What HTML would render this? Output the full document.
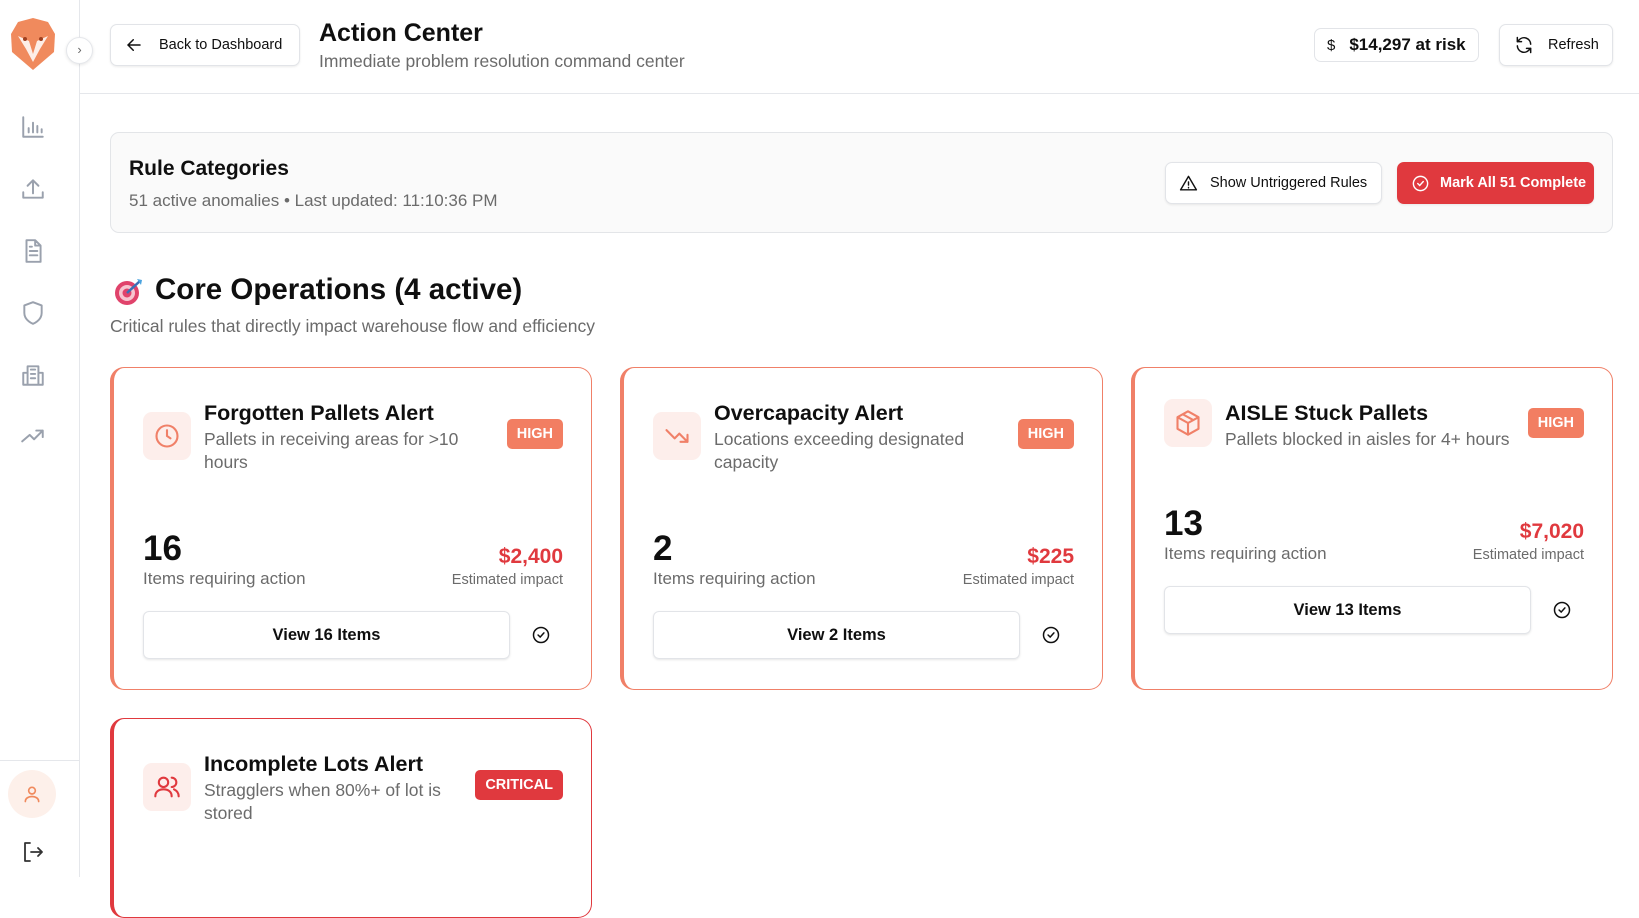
<!DOCTYPE html>
<html><head><meta charset="utf-8"><style>
*{box-sizing:border-box;margin:0;padding:0}
body{width:1639px;height:877px;overflow:hidden;background:#fff;font-family:"Liberation Sans",Arial,sans-serif;color:#0f0f0f;position:relative}
.abs{position:absolute}
.side{left:0;top:0;width:80px;height:877px;border-right:1px solid #e5e7eb;background:#fff}
.btn{position:absolute;border:1px solid #e2e4e8;border-radius:7px;background:#fff;display:flex;align-items:center;box-shadow:0 1px 2px rgba(0,0,0,.08);font-size:14.5px}
.card{position:absolute;border:1px solid #f08068;border-left:4px solid #f08068;border-radius:14px;background:#fff;padding:31px 28px 0 29px}
.hd{display:flex;align-items:flex-start}
.ic{width:48px;height:48px;border-radius:9px;background:#fdeeeb;display:flex;align-items:center;justify-content:center;flex:none;margin-top:13px}
.tt{margin-left:13px;flex:1}
.tt h3{font-size:21.5px;font-weight:600;line-height:26px;margin-top:1px}
.tt p{font-size:17.5px;color:#6b6b6b;line-height:23px;margin-top:2px}
.badge{background:#f27e62;color:#fff;font-weight:700;font-size:14.5px;border-radius:5px;padding:7px 10px;margin-top:20px;flex:none}
.nums{display:flex;justify-content:space-between;align-items:flex-end;margin-top:56px}
.big{font-size:35px;font-weight:700;line-height:38px}
.lbl{font-size:17px;color:#6b6b6b;line-height:22px}
.amt{font-size:21px;font-weight:600;color:#e0393e;text-align:right;line-height:26px}
.el{font-size:14.5px;color:#6b6b6b;text-align:right;line-height:20px}
.row{display:flex;align-items:center;margin-top:21px}
.vb{width:367px;height:48px;border:1px solid #e2e4e8;border-radius:6px;box-shadow:0 1px 2px rgba(0,0,0,.1);display:flex;align-items:center;justify-content:center;font-weight:700;font-size:16.5px}
.sv{stroke:#9aa1ad;fill:none;stroke-width:1.8;stroke-linecap:round;stroke-linejoin:round}
</style></head><body>
<div class="abs side">
<svg class="abs" style="left:8px;top:16px" width="50" height="55" viewBox="0 0 50 55"><path d="M25 2 L40 6 L47 18 L46 36 L25 54 L4 36 L3 18 L10 6 Z" fill="#f08a5d"/><path d="M10 20 L21 25 L25 38 L29 25 L40 20 L32 33 L25 46 L18 33 Z" fill="#fff" opacity=".85"/><circle cx="17" cy="23" r="2" fill="#a04020"/><circle cx="33" cy="23" r="2" fill="#a04020"/></svg>
<div class="abs" style="left:66px;top:37px;width:27px;height:27px;border-radius:50%;border:1px solid #e5e7eb;background:#fff;box-shadow:0 1px 3px rgba(0,0,0,.1);font-size:13px;color:#666;text-align:center;line-height:24px">›</div>
<svg class="abs" style="left:20px;top:114px" width="26" height="26" viewBox="0 0 24 24"><path class="sv" d="M3 3v18h18M8 17v-4M12 17V8M16 17v-6M20 17v-3"/></svg>
<svg class="abs" style="left:20px;top:176px" width="26" height="26" viewBox="0 0 24 24"><path class="sv" d="M3 15v5h18v-5M12 16V4M7 9l5-5 5 5"/></svg>
<svg class="abs" style="left:20px;top:238px" width="26" height="26" viewBox="0 0 24 24"><path class="sv" d="M14 2H6v20h13V7zM14 2v5h5M9 12h7M9 16h7M9 8h2"/></svg>
<svg class="abs" style="left:20px;top:300px" width="26" height="26" viewBox="0 0 24 24"><path class="sv" d="M12 22s8-3 8-10V5l-8-3-8 3v7c0 7 8 10 8 10z"/></svg>
<svg class="abs" style="left:20px;top:362px" width="26" height="26" viewBox="0 0 24 24"><path class="sv" d="M7 21V4h10v17zM7 10H3v11h18V10h-4M10 7h4M10 11h4M10 15h4"/></svg>
<svg class="abs" style="left:20px;top:423px" width="26" height="26" viewBox="0 0 24 24"><path class="sv" d="M2 17l7-6 4 4 8-8M15 7h6v6"/></svg>
<div class="abs" style="left:0;top:760px;width:80px;border-top:1px solid #e5e7eb"></div>
<div class="abs" style="left:8px;top:770px;width:48px;height:48px;border-radius:50%;background:#fdf0ea"></div>
<svg class="abs" style="left:22px;top:784px" width="20" height="20" viewBox="0 0 24 24"><circle cx="12" cy="8" r="4" fill="none" stroke="#f08a5d" stroke-width="2"/><path d="M4 21c0-4 4-6 8-6s8 2 8 6" fill="none" stroke="#f08a5d" stroke-width="2" stroke-linecap="round"/></svg>
<svg class="abs" style="left:21px;top:840px" width="24" height="24" viewBox="0 0 24 24"><path d="M9 3H4v18h5M10 12h11M17 8l4 4-4 4" fill="none" stroke="#333" stroke-width="1.8" stroke-linecap="round" stroke-linejoin="round"/></svg>
</div>
<div class="abs" style="left:80px;top:93px;width:1559px;border-top:1px solid #e5e7eb"></div>
<div class="btn" style="left:110px;top:24px;width:190px;height:42px;padding-left:14px"><svg width="18" height="18" viewBox="0 0 24 24"><path d="M20 12H5M11 5l-7 7 7 7" fill="none" stroke="#111" stroke-width="2" stroke-linecap="round"/></svg><span style="margin-left:16px">Back to Dashboard</span></div>
<div class="abs" style="left:319px;top:19px;font-size:25px;font-weight:700">Action Center</div>
<div class="abs" style="left:319px;top:51px;font-size:17.5px;color:#6b6b6b">Immediate problem resolution command center</div>
<div class="btn" style="left:1314px;top:28px;width:165px;height:34px;padding-left:12px;box-shadow:none;font-size:17px;font-weight:600"><span style="font-weight:400;font-size:15px">$</span><span style="margin-left:14px">$14,297 at risk</span></div>
<div class="btn" style="left:1499px;top:24px;width:114px;height:42px;padding-left:14px"><svg width="20" height="20" viewBox="0 0 24 24"><path d="M20 11a8 8 0 0 0-14-5L4 8M4 3v5h5M4 13a8 8 0 0 0 14 5l2-2M20 21v-5h-5" fill="none" stroke="#111" stroke-width="1.8" stroke-linecap="round" stroke-linejoin="round"/></svg><span style="margin-left:14px">Refresh</span></div>
<div class="abs" style="left:110px;top:132px;width:1503px;height:101px;background:#fafafa;border:1px solid #e3e5e8;border-radius:9px"></div>
<div class="abs" style="left:129px;top:157px;font-size:21px;font-weight:600">Rule Categories</div>
<div class="abs" style="left:129px;top:191px;font-size:17px;color:#6b6b6b">51 active anomalies • Last updated: 11:10:36 PM</div>
<div class="btn" style="left:1165px;top:162px;width:217px;height:42px;padding-left:13px"><svg width="19" height="19" viewBox="0 0 24 24"><path d="M12 3L2 20h20zM12 10v4M12 17v.5" fill="none" stroke="#111" stroke-width="1.8" stroke-linejoin="round" stroke-linecap="round"/></svg><span style="margin-left:12px">Show Untriggered Rules</span></div>
<div class="btn" style="left:1397px;top:162px;width:197px;height:42px;padding-left:13px;background:#e0393e;border-color:#e0393e;color:#fff;font-weight:600"><svg width="19" height="19" viewBox="0 0 24 24"><circle cx="12" cy="12" r="9" fill="none" stroke="#fff" stroke-width="1.8"/><path d="M8.5 12l2.5 2.5 4.5-5" fill="none" stroke="#fff" stroke-width="1.8" stroke-linecap="round"/></svg><span style="margin-left:10px">Mark All 51 Complete</span></div>
<svg class="abs" style="left:113px;top:276px" width="32" height="32" viewBox="0 0 32 32"><circle cx="14" cy="17" r="12" fill="#e0436b"/><circle cx="14" cy="17" r="8" fill="#f7c5d0"/><circle cx="14" cy="17" r="4.5" fill="#e0436b"/><path d="M14 17L27 5" stroke="#3b6fb6" stroke-width="2.5"/><path d="M24 3l5 1-1 5z" fill="#4aa3df"/></svg>
<div class="abs" style="left:155px;top:273px;font-size:29.5px;font-weight:700">Core Operations (4 active)</div>
<div class="abs" style="left:110px;top:316px;font-size:17.5px;color:#6b6b6b">Critical rules that directly impact warehouse flow and efficiency</div>

<div class="card" style="left:110px;top:367px;width:482px;height:323px">
<div class="hd"><div class="ic"><svg width="28" height="28" viewBox="0 0 24 24"><circle cx="12" cy="12" r="9" fill="none" stroke="#f08068" stroke-width="1.8"/><path d="M12 7v5l3 2" fill="none" stroke="#f08068" stroke-width="1.8" stroke-linecap="round"/></svg></div><div class="tt"><h3>Forgotten Pallets Alert</h3><p>Pallets in receiving areas for &gt;10<br>hours</p></div><div class="badge">HIGH</div></div>
<div class="nums"><div><div class="big">16</div><div class="lbl">Items requiring action</div></div><div><div class="amt">$2,400</div><div class="el">Estimated impact</div></div></div>
<div class="row"><div class="vb">View 16 Items</div><svg style="margin-left:21px" width="20" height="20" viewBox="0 0 24 24"><circle cx="12" cy="12" r="9" fill="none" stroke="#111" stroke-width="1.8"/><path d="M8.5 12l2.5 2.5 4.5-5" fill="none" stroke="#111" stroke-width="1.8" stroke-linecap="round"/></svg></div>
</div>
<div class="card" style="left:620px;top:367px;width:483px;height:323px">
<div class="hd"><div class="ic"><svg width="28" height="28" viewBox="0 0 24 24"><path d="M3 7l7 7 4-4 7 7M15 17h6v-6" fill="none" stroke="#f08068" stroke-width="1.8" stroke-linecap="round" stroke-linejoin="round"/></svg></div><div class="tt"><h3>Overcapacity Alert</h3><p>Locations exceeding designated<br>capacity</p></div><div class="badge">HIGH</div></div>
<div class="nums"><div><div class="big">2</div><div class="lbl">Items requiring action</div></div><div><div class="amt">$225</div><div class="el">Estimated impact</div></div></div>
<div class="row"><div class="vb">View 2 Items</div><svg style="margin-left:21px" width="20" height="20" viewBox="0 0 24 24"><circle cx="12" cy="12" r="9" fill="none" stroke="#111" stroke-width="1.8"/><path d="M8.5 12l2.5 2.5 4.5-5" fill="none" stroke="#111" stroke-width="1.8" stroke-linecap="round"/></svg></div>
</div>
<div class="card" style="left:1131px;top:367px;width:482px;height:323px">
<div class="hd"><div class="ic" style="margin-top:0"><svg width="28" height="28" viewBox="0 0 24 24"><path d="M12 2l9 5v10l-9 5-9-5V7zM3 7l9 5 9-5M12 12v10M7.5 4.5l9 5" fill="none" stroke="#f08068" stroke-width="1.8" stroke-linejoin="round"/></svg></div><div class="tt"><h3>AISLE Stuck Pallets</h3><p style="white-space:nowrap">Pallets blocked in aisles for 4+ hours</p></div><div class="badge" style="margin-top:9px">HIGH</div></div>
<div class="nums" style="margin-top:54px"><div><div class="big">13</div><div class="lbl">Items requiring action</div></div><div><div class="amt">$7,020</div><div class="el">Estimated impact</div></div></div>
<div class="row"><div class="vb">View 13 Items</div><svg style="margin-left:21px" width="20" height="20" viewBox="0 0 24 24"><circle cx="12" cy="12" r="9" fill="none" stroke="#111" stroke-width="1.8"/><path d="M8.5 12l2.5 2.5 4.5-5" fill="none" stroke="#111" stroke-width="1.8" stroke-linecap="round"/></svg></div>
</div>
<div class="card" style="left:110px;top:718px;width:482px;height:200px;border-color:#e0393e">
<div class="hd"><div class="ic"><svg width="28" height="28" viewBox="0 0 24 24"><circle cx="9" cy="8" r="4" fill="none" stroke="#e0393e" stroke-width="1.8"/><path d="M2 20c0-4 3-6 7-6s7 2 7 6M16 4a4 4 0 0 1 0 8M18 14c2 1 4 3 4 6" fill="none" stroke="#e0393e" stroke-width="1.8" stroke-linecap="round"/></svg></div><div class="tt"><h3>Incomplete Lots Alert</h3><p>Stragglers when 80%+ of lot is<br>stored</p></div><div class="badge" style="background:#e0393e">CRITICAL</div></div>
</div>
</body></html>
